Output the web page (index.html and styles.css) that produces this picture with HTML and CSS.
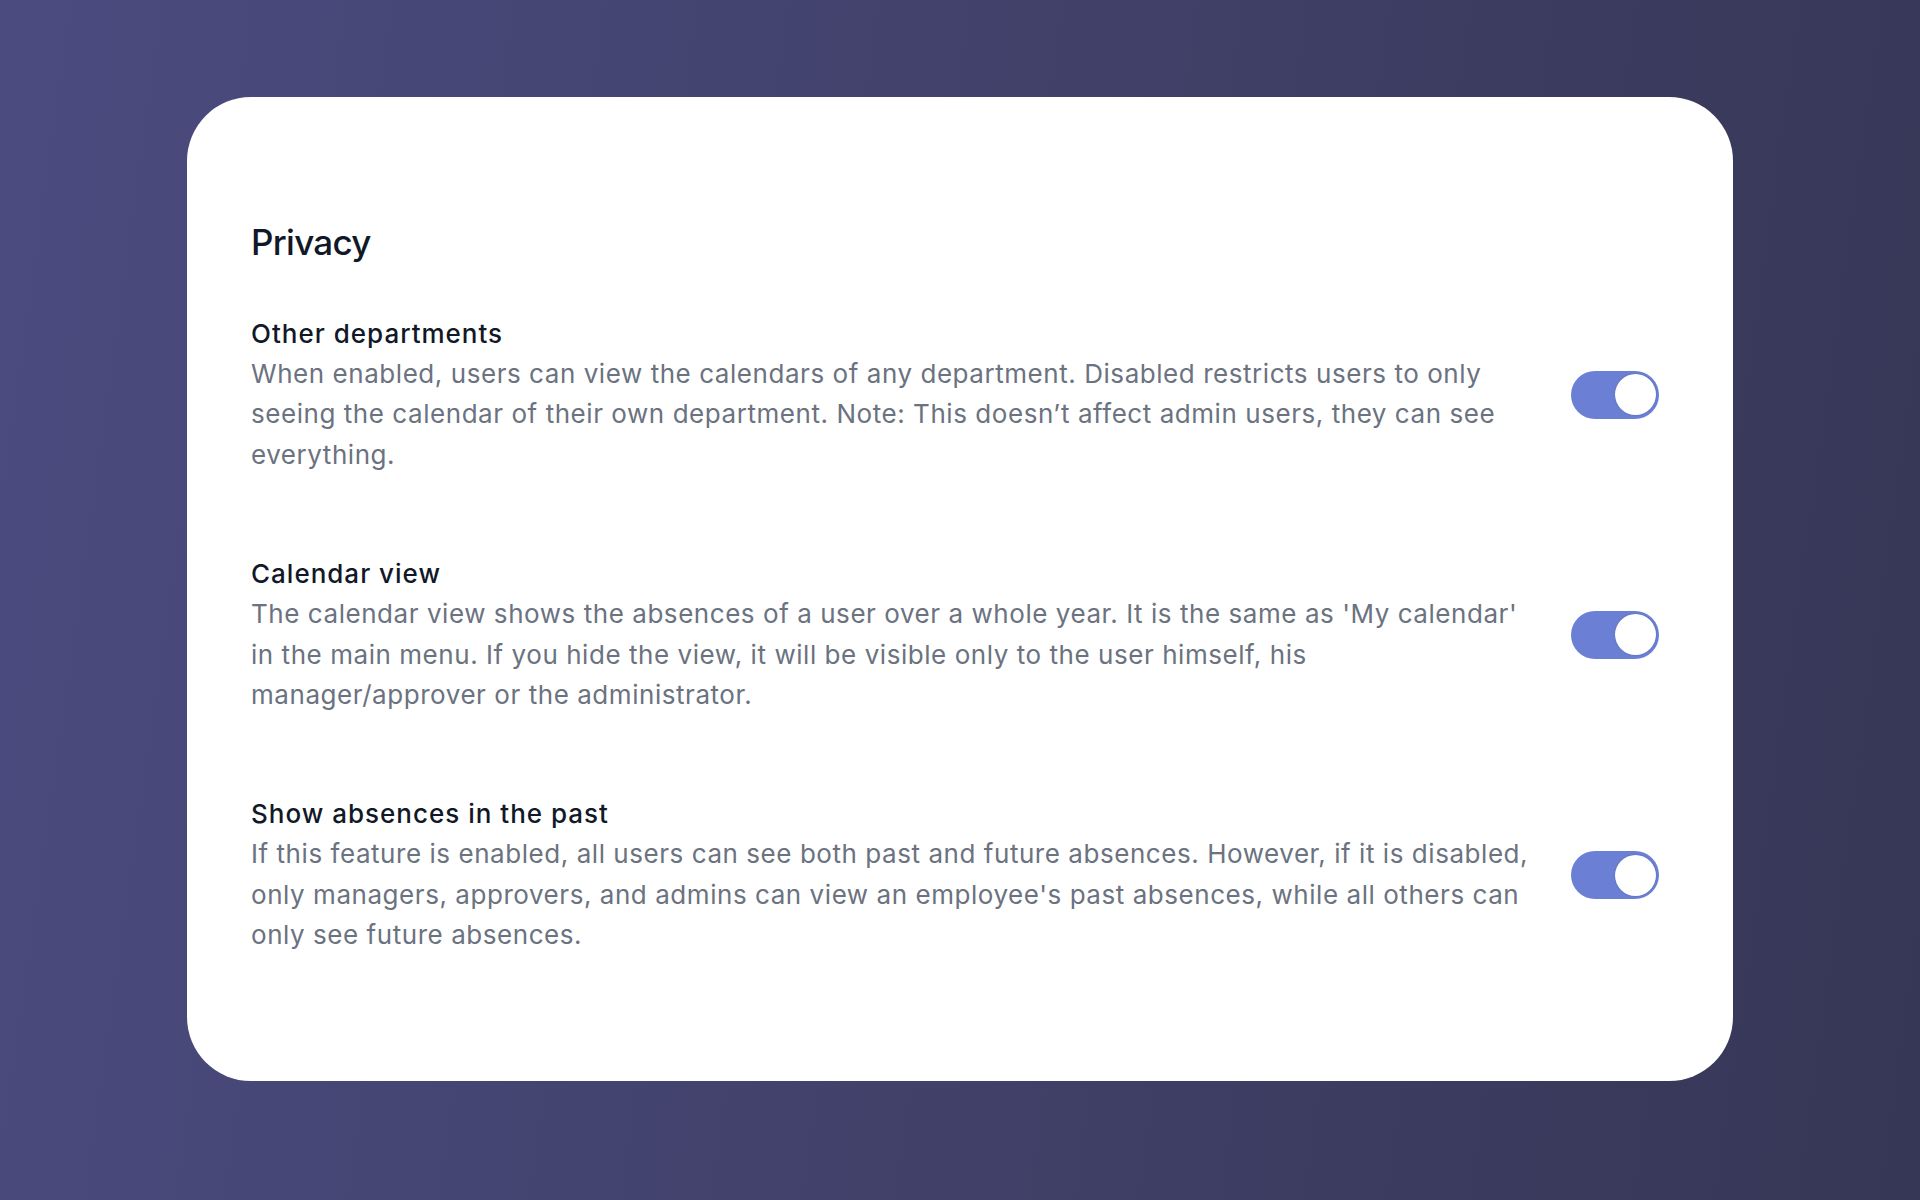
FILE: index.html
```html
<!DOCTYPE html>
<html lang="en">
<head>
<meta charset="utf-8">
<title>Privacy</title>
<link rel="stylesheet" href="styles.css">
</head>
<body>
<main class="stage">
  <section class="card">
    <h1 class="card-title">Privacy</h1>
    <div class="settings">
      <div class="setting">
        <div class="setting-text">
          <h2 class="setting-title">Other departments</h2>
          <p class="setting-desc">When enabled, users can view the calendars of any department. Disabled restricts users to only seeing the calendar of their own department. Note: This doesn’t affect admin users, they can see everything.</p>
        </div>
        <span class="toggle on"><span class="knob"></span></span>
      </div>
      <div class="setting">
        <div class="setting-text">
          <h2 class="setting-title">Calendar view</h2>
          <p class="setting-desc">The calendar view shows the absences of a user over a whole year. It is the same as 'My calendar' in the main menu. If you hide the view, it will be visible only to the user himself, his manager/approver or the administrator.</p>
        </div>
        <span class="toggle on"><span class="knob"></span></span>
      </div>
      <div class="setting">
        <div class="setting-text">
          <h2 class="setting-title">Show absences in the past</h2>
          <p class="setting-desc">If this feature is enabled, all users can see both past and future absences. However, if it is disabled, only managers, approvers, and admins can view an employee's past absences, while all others can only see future absences.</p>
        </div>
        <span class="toggle on"><span class="knob"></span></span>
      </div>
    </div>
  </section>
</main>
</body>
</html>
```

FILE: styles.css
```css
* { box-sizing: border-box; }
html, body { margin: 0; padding: 0; }
body {
  width: 1920px;
  height: 1200px;
  font-family: Inter, "Noto Sans", "Liberation Sans", sans-serif;
  background: linear-gradient(98deg, #4b4b80 0%, #404068 55%, #363656 100%);
}
.stage {
  height: 1200px;
  padding: 97px 187px 0 187px;
}
.card {
  width: 1546px;
  height: 984px;
  background: #ffffff;
  border-radius: 64px;
  padding: 123px 74px 0 64px;
}
.card-title {
  margin: 0;
  font-size: 35px;
  line-height: 44px;
  font-weight: 500;
  letter-spacing: -0.7px;
  color: #111827;
}
.settings {
  margin-top: 50px;
  display: flex;
  flex-direction: column;
  gap: 79px;
}
.setting {
  display: flex;
  align-items: center;
  gap: 40px;
}
.setting-text {
  flex: 1;
  min-width: 0;
}
.setting-title {
  margin: 0;
  font-size: 26px;
  line-height: 40px;
  font-weight: 500;
  letter-spacing: 1px;
  color: #111827;
}
.setting-desc {
  margin: 0;
  font-size: 26px;
  line-height: 40.4px;
  font-weight: 400;
  letter-spacing: 0.55px;
  color: #6b7280;
}
.toggle {
  flex: 0 0 auto;
  width: 88px;
  height: 48px;
  border-radius: 24px;
  background: #6b80d4;
  display: flex;
  align-items: center;
  padding: 0 3.5px;
}
.toggle.on { justify-content: flex-end; }
.knob {
  width: 41px;
  height: 41px;
  border-radius: 50%;
  background: #ffffff;
  box-shadow: 0 0 1.5px rgba(40, 50, 110, 0.45);
}
```
